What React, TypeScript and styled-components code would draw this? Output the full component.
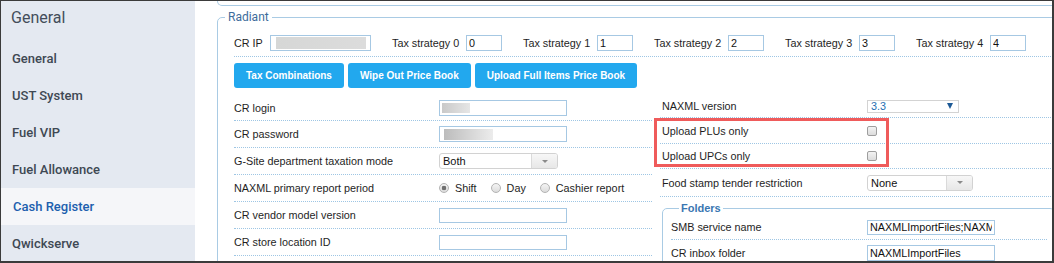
import React from "react";
import styled, { createGlobalStyle, css } from "styled-components";

const GlobalStyle = createGlobalStyle`
  html, body { margin: 0; padding: 0; background: #fff; }
  body { font-family: "Liberation Sans", Arial, sans-serif; }
  *, *::before, *::after { box-sizing: border-box; }
`;

const Frame = styled.div`
  width: 1054px;
  height: 263px;
  border: 1px solid #3b3b3b;
  border-right-width: 2px;
  border-bottom-width: 2px;
  display: flex;
  overflow: hidden;
  background: #fff;
`;

const Sidebar = styled.nav`
  width: 194px;
  flex: none;
  background: #e4e9f1;
  font-family: Roboto, "Noto Sans", sans-serif;
`;

const SideTitle = styled.div`
  height: 38.5px;
  padding: 6px 0 0 10px;
  font-size: 16px;
  line-height: 22px;
  color: #434d5a;
`;

const NavItem = styled.div<{ $active?: boolean }>`
  height: 37px;
  display: flex;
  align-items: center;
  padding-left: ${(p) => (p.$active ? 12 : 11)}px;
  font-size: 13px;
  font-weight: 500;
  color: ${(p) => (p.$active ? "#1c5fae" : "#3e4853")};
  background: ${(p) => (p.$active ? "#f5f6f9" : "transparent")};
`;

const Main = styled.main`
  flex: 1;
  min-width: 0;
  padding-left: 22px;
  overflow: hidden;
  font-family: "Liberation Sans", Arial, sans-serif;
  font-size: 10.8px;
  color: #1e1e1e;
`;

const PrevFieldset = styled.div`
  height: 5px;
  margin-right: -20px;
  border: 1px solid #a9cbe4;
  border-top: none;
  border-radius: 0 0 5px 5px;
`;

const Fieldset = styled.fieldset`
  margin: 4px -20px 0 0;
  padding: 0;
  border: 1px solid #a9cbe4;
  border-radius: 5px;
  min-width: 0;
`;

const Legend = styled.legend<{ $bold?: boolean }>`
  margin-left: ${(p) => (p.$bold ? 8 : 7)}px;
  padding: 0 ${(p) => (p.$bold ? 2 : 3)}px;
  font-family: ${(p) => (p.$bold ? '"Liberation Sans", Arial, sans-serif' : 'Roboto, "Noto Sans", sans-serif')};
  font-size: ${(p) => (p.$bold ? 11 : 12)}px;
  font-weight: ${(p) => (p.$bold ? 700 : 400)};
  line-height: ${(p) => (p.$bold ? 14 : 15)}px;
  color: ${(p) => (p.$bold ? "#3a77b2" : "#3d6c9b")};
`;

const Body = styled.div`
  padding: 0 8px 0 16px;
`;

const dotted = css`
  border-bottom: 1px dotted #9ec6e4;
`;

const TopRow = styled.div`
  display: flex;
  align-items: center;
  padding: 10px 0 5px;
  ${dotted};
`;

const Group = styled.div`
  display: flex;
  align-items: center;
  margin-right: 21px;
  flex: none;
`;

const InlineLabel = styled.span<{ $w: number }>`
  width: ${(p) => p.$w}px;
  flex: none;
  white-space: nowrap;
`;

const boxCss = css`
  border: 1px solid #a6c8e3;
  background: #fff;
  font: inherit;
  color: #111;
  padding: 0 2px;
  outline: none;
  flex: none;
`;

const TextInput = styled.input<{ $w: number; $h?: number }>`
  ${boxCss};
  width: ${(p) => p.$w}px;
  height: ${(p) => p.$h ?? 16}px;
`;

const MaskedBox = styled.div<{ $w: number }>`
  ${boxCss};
  width: ${(p) => p.$w}px;
  height: 16px;
  display: flex;
  align-items: center;
`;

const Redacted = styled.span<{ $w: number; $h: number; $x: number; $from: string; $to: string }>`
  display: block;
  width: ${(p) => p.$w}px;
  height: ${(p) => p.$h}px;
  margin-left: ${(p) => p.$x}px;
  background: linear-gradient(90deg, ${(p) => p.$from}, ${(p) => p.$to});
  filter: blur(0.4px);
`;

const ButtonRow = styled.div`
  display: flex;
  gap: 4px;
  margin-top: 6px;
`;

const Button = styled.button`
  height: 25px;
  padding: 0 12px;
  border: none;
  border-radius: 3px;
  background: #22a8ee;
  color: #fff;
  font-family: "Liberation Sans", Arial, sans-serif;
  font-weight: 700;
  font-size: 10px;
  cursor: pointer;
`;

const Columns = styled.div`
  display: grid;
  grid-template-columns: 418px 1fr;
  column-gap: 8px;
  margin-top: 7px;
  align-items: start;
`;

const Column = styled.div`
  display: flex;
  flex-direction: column;
  min-width: 0;
`;

const Row = styled.div<{ $h: number }>`
  display: flex;
  align-items: center;
  height: ${(p) => p.$h}px;
  ${dotted};
  white-space: nowrap;
`;

const Label = styled.span<{ $w: number; $pad?: number }>`
  width: ${(p) => p.$w}px;
  padding-left: ${(p) => p.$pad ?? 0}px;
  flex: none;
`;

const Select = styled.div<{ $w: number }>`
  width: ${(p) => p.$w}px;
  height: 16px;
  display: flex;
  border: 1px solid #d2d2d2;
  border-radius: 3px;
  overflow: hidden;
  background: #fff;
  flex: none;
`;

const SelectValue = styled.span`
  flex: 1;
  padding-left: 3px;
  line-height: 14px;
  font-size: 11px;
  color: #111;
`;

const SelectArrow = styled.span`
  width: 26px;
  border-left: 1px solid #dadada;
  background: linear-gradient(#f7f7f7, #e7e7e7);
  display: flex;
  align-items: center;
  justify-content: center;
  &::after {
    content: "";
    border-left: 3px solid transparent;
    border-right: 3px solid transparent;
    border-top: 3px solid #8a8a8a;
  }
`;

const MiniSelect = styled.div`
  width: 92px;
  height: 13px;
  border: 1px solid #d3d3d3;
  display: flex;
  align-items: center;
  justify-content: space-between;
  padding: 0 5px 0 3px;
  color: #1f6fb2;
  font-size: 10.8px;
  line-height: 11px;
  flex: none;
  &::after {
    content: "";
    border-left: 3px solid transparent;
    border-right: 3px solid transparent;
    border-top: 6px solid #1d5a96;
  }
`;

const Checkbox = styled.span`
  width: 10px;
  height: 10px;
  border: 1px solid #9e9e9e;
  border-radius: 2px;
  background: linear-gradient(#f3f3f3, #dcdcdc);
  flex: none;
`;

const RadioGroup = styled.div`
  display: flex;
  align-items: center;
`;

const RadioOption = styled.span`
  display: flex;
  align-items: center;
  gap: 6px;
  margin-right: 14px;
`;

const RadioDot = styled.span<{ $checked?: boolean }>`
  width: 10px;
  height: 10px;
  border-radius: 50%;
  border: 1px solid #b3b3b3;
  flex: none;
  background: ${(p) =>
    p.$checked
      ? "radial-gradient(circle, #707070 0 2px, transparent 2.6px), linear-gradient(#f4f4f4, #dcdcdc)"
      : "linear-gradient(#f4f4f4, #dcdcdc)"};
`;

const Highlight = styled.div`
  position: relative;
  display: flex;
  flex-direction: column;
`;

const HighlightFrame = styled.div`
  position: absolute;
  left: -6px;
  top: 0;
  width: 235px;
  height: 49px;
  border: 3px solid #ef5b5b;
  pointer-events: none;
`;

const SubFieldset = styled.fieldset`
  margin: 4px 8px 0 2px;
  padding: 0 7px 0 8px;
  border: 1px solid #a9cbe4;
  border-radius: 5px;
  min-width: 0;
`;

const navItems = ["General", "UST System", "Fuel VIP", "Fuel Allowance", "Cash Register", "Qwickserve"];

export default function App() {
  return (
    <>
      <GlobalStyle />
      <Frame>
        <Sidebar>
          <SideTitle>General</SideTitle>
          {navItems.map((n) => (
            <NavItem key={n} $active={n === "Cash Register"}>
              {n}
            </NavItem>
          ))}
        </Sidebar>
        <Main>
          <PrevFieldset />
          <Fieldset>
            <Legend>Radiant</Legend>
            <Body>
              <TopRow>
                <Group>
                  <InlineLabel $w={36}>CR IP</InlineLabel>
                  <MaskedBox $w={101}>
                    <Redacted $w={90} $h={12} $x={3} $from="#d6d7d6" $to="#dcdcdc" />
                  </MaskedBox>
                </Group>
                {[0, 1, 2, 3, 4].map((i) => (
                  <Group key={i}>
                    <InlineLabel $w={74}>Tax strategy {i}</InlineLabel>
                    <TextInput $w={36} readOnly value={String(i)} />
                  </Group>
                ))}
              </TopRow>
              <ButtonRow>
                <Button>Tax Combinations</Button>
                <Button>Wipe Out Price Book</Button>
                <Button>Upload Full Items Price Book</Button>
              </ButtonRow>
              <Columns>
                <Column>
                  <Row $h={26}>
                    <Label $w={205}>CR login</Label>
                    <MaskedBox $w={128}>
                      <Redacted $w={28} $h={10} $x={0} $from="#c9c9c9" $to="#e6e6e6" />
                    </MaskedBox>
                  </Row>
                  <Row $h={27}>
                    <Label $w={205}>CR password</Label>
                    <MaskedBox $w={128}>
                      <Redacted $w={49} $h={11} $x={2} $from="#bcbcbc" $to="#ececec" />
                    </MaskedBox>
                  </Row>
                  <Row $h={27}>
                    <Label $w={205}>G-Site department taxation mode</Label>
                    <Select $w={119}>
                      <SelectValue>Both</SelectValue>
                      <SelectArrow />
                    </Select>
                  </Row>
                  <Row $h={27}>
                    <Label $w={205}>NAXML primary report period</Label>
                    <RadioGroup>
                      <RadioOption>
                        <RadioDot $checked />
                        Shift
                      </RadioOption>
                      <RadioOption>
                        <RadioDot />
                        Day
                      </RadioOption>
                      <RadioOption>
                        <RadioDot />
                        Cashier report
                      </RadioOption>
                    </RadioGroup>
                  </Row>
                  <Row $h={27}>
                    <Label $w={205}>CR vendor model version</Label>
                    <TextInput $w={128} $h={15} readOnly value="" />
                  </Row>
                  <Row $h={27}>
                    <Label $w={205}>CR store location ID</Label>
                    <TextInput $w={128} $h={15} readOnly value="" />
                  </Row>
                </Column>
                <Column>
                  <Row $h={23}>
                    <Label $w={207} $pad={2}>NAXML version</Label>
                    <MiniSelect>3.3</MiniSelect>
                  </Row>
                  <Highlight>
                    <Row $h={26}>
                      <Label $w={207} $pad={2}>Upload PLUs only</Label>
                      <Checkbox />
                    </Row>
                    <Row $h={25}>
                      <Label $w={207} $pad={2}>Upload UPCs only</Label>
                      <Checkbox />
                    </Row>
                    <HighlightFrame />
                  </Highlight>
                  <Row $h={28}>
                    <Label $w={207} $pad={2}>Food stamp tender restriction</Label>
                    <Select $w={106}>
                      <SelectValue>None</SelectValue>
                      <SelectArrow />
                    </Select>
                  </Row>
                  <SubFieldset>
                    <Legend $bold>Folders</Legend>
                    <Row $h={25}>
                      <Label $w={196}>SMB service name</Label>
                      <TextInput $w={128} $h={15} readOnly value="NAXMLImportFiles;NAXMLExportFiles" />
                    </Row>
                    <Row $h={27}>
                      <Label $w={196}>CR inbox folder</Label>
                      <TextInput $w={128} $h={16} readOnly value="NAXMLImportFiles" />
                    </Row>
                  </SubFieldset>
                </Column>
              </Columns>
            </Body>
          </Fieldset>
        </Main>
      </Frame>
    </>
  );
}
